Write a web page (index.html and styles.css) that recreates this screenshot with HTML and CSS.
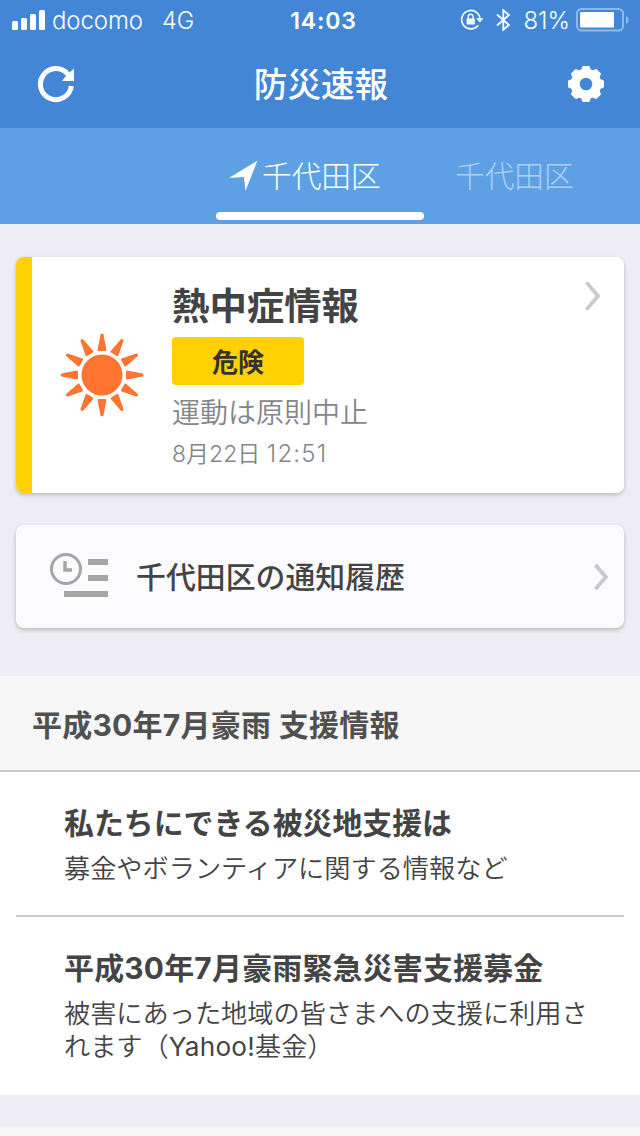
FILE: index.html
```html
<!DOCTYPE html>
<html lang="ja">
<head>
<meta charset="utf-8">
<title>防災速報</title>
<link rel="stylesheet" href="styles.css">
</head>
<body>
<header class="header">
  <div class="status">
    <div class="status-side">
      <svg class="signal" width="34" height="20" viewBox="0 0 34 20" fill="#fff"><rect x="0" y="11" width="6" height="9" rx="1.5"/><rect x="9" y="8" width="6" height="12" rx="1.5"/><rect x="18" y="4" width="6" height="16" rx="1.5"/><rect x="27" y="0" width="6" height="20" rx="1.5"/></svg>
      <span class="carrier">docomo</span><span class="network">4G</span>
    </div>
    <span class="clock">14:03</span>
    <div class="status-side status-right">
      <svg class="lock" width="24" height="22" viewBox="0 0 24 22"><path d="M18.2 16.2A9.2 9.2 0 1 1 20 9.6" fill="none" stroke="#fff" stroke-width="1.6"/><path d="M16.2 9.2h7.4L19.9 13.4z" fill="#fff"/><rect x="6.6" y="9.4" width="8.2" height="6.2" rx=".8" fill="#fff"/><path d="M8.3 10V7.6a2.4 2.4 0 0 1 4.8 0V10" fill="none" stroke="#fff" stroke-width="1.4"/></svg>
      <svg class="bluetooth" width="15" height="24" viewBox="0 0 15 24" fill="none" stroke="#fff" stroke-width="1.8"><path d="M1 6.5 13 17 7.3 21.8V2.2L13 7 1 17.5"/></svg>
      <span class="percent">81%</span>
      <svg class="battery" width="54" height="24" viewBox="0 0 54 24"><rect x="1" y="1" width="46" height="21.5" rx="4.5" fill="none" stroke="#8fb9ec" stroke-width="2"/><rect x="4" y="4" width="34" height="15.5" rx="1" fill="#fff"/><path d="M50 8c3.4 1 3.4 7 0 8z" fill="#8fb9ec"/></svg>
    </div>
  </div>
  <div class="navbar">
    <svg class="reload" width="38" height="38" viewBox="0 0 38 38"><path d="M34.3 21A15.5 15.5 0 1 1 31 9.4" fill="none" stroke="#fff" stroke-width="5"/><path d="M37 3.5V16H25L28 12 31.5 8.5z" fill="#fff"/></svg>
    <h1 class="title">防災速報</h1>
    <svg class="gear" width="38" height="38" viewBox="-19 -19 38 38"><defs><path id="tooth" d="M-5.6-11-3.9-17Q-3.6-18-2.6-18H2.6Q3.6-18 3.9-17L5.6-11z"/></defs><circle r="10.8" fill="none" stroke="#fff" stroke-width="9"/><g fill="#fff"><use href="#tooth"/><use href="#tooth" transform="rotate(45)"/><use href="#tooth" transform="rotate(90)"/><use href="#tooth" transform="rotate(135)"/><use href="#tooth" transform="rotate(180)"/><use href="#tooth" transform="rotate(225)"/><use href="#tooth" transform="rotate(270)"/><use href="#tooth" transform="rotate(315)"/></g></svg>
  </div>
</header>
<nav class="tabs">
  <a class="tab tab-active"><svg width="29" height="32" viewBox="0 0 29 32"><path d="M28.5.5 16.5 31 15 17 0 18z" fill="#fff"/></svg><span>千代田区</span></a>
  <a class="tab tab-next">千代田区</a>
</nav>
<main>
  <section class="card alert">
    <svg class="sun" width="84" height="84" viewBox="-42 -42 84 84" fill="#ff7430"><defs><path id="ray" d="M-4.4-25.2-1.5-40.5Q0-42.4 1.5-40.5L4.4-25.2Q4.5-24 3.4-24H-3.4Q-4.5-24-4.4-25.2z"/></defs><circle r="20.5"/><use href="#ray"/><use href="#ray" transform="rotate(30)"/><use href="#ray" transform="rotate(60)"/><use href="#ray" transform="rotate(90)"/><use href="#ray" transform="rotate(120)"/><use href="#ray" transform="rotate(150)"/><use href="#ray" transform="rotate(180)"/><use href="#ray" transform="rotate(210)"/><use href="#ray" transform="rotate(240)"/><use href="#ray" transform="rotate(270)"/><use href="#ray" transform="rotate(300)"/><use href="#ray" transform="rotate(330)"/></svg>
    <div class="alert-body">
      <h2 class="alert-title">熱中症情報</h2>
      <span class="badge">危険</span>
      <p class="alert-text">運動は原則中止</p>
      <time class="alert-time">8月22日 <span class="alert-clock">12:51</span></time>
    </div>
    <svg class="chevron" width="16" height="30" viewBox="0 0 16 30"><path d="M2.5 2.5 13 15 2.5 27.5" fill="none" stroke="#ccc" stroke-width="3.8" stroke-linecap="round"/></svg>
  </section>
  <section class="card history">
    <svg class="history-icon" width="60" height="46" viewBox="0 0 60 46"><g fill="none" stroke="#a5a5a5"><circle cx="16" cy="16" r="14.5" stroke-width="3"/><path d="M15 8v9h7" stroke-width="3.4"/></g><path d="M38 6h20v6H38zM38 22h20v6H38zM14 38h44v6H14z" fill="#a5a5a5"/></svg>
    <h2 class="history-title">千代田区の通知履歴</h2>
    <svg width="16" height="28" viewBox="0 0 16 28"><path d="M2.5 2 12.8 14 2.5 26" fill="none" stroke="#c7c7cc" stroke-width="3.8"/></svg>
  </section>
  <section class="support">
    <h2 class="support-heading">平成30年7月豪雨 支援情報</h2>
    <article class="item">
      <h3 class="item-title">私たちにできる被災地支援は</h3>
      <p class="item-text">募金やボランティアに関する情報など</p>
    </article>
    <article class="item item-last">
      <h3 class="item-title item-title-wide">平成30年7月豪雨緊急災害支援募金</h3>
      <p class="item-text">被害にあった地域の皆さまへの支援に利用さ<br>れます（<span class="latin">Yahoo!</span>基金）</p>
    </article>
  </section>
  <div class="next-section"></div>
</main>
</body>
</html>
```
FILE: styles.css
```css
* { box-sizing: border-box; margin: 0; padding: 0; }
body {
  width: 640px; height: 1136px; overflow: hidden;
  background: #eeedf3; color: #444;
  font-family: Inter, "Noto Sans CJK JP", sans-serif;
  white-space: nowrap;
}
svg { display: block; flex: none; }
.header { height: 128px; background: #4286d5; color: #fff; }
.status { height: 40px; display: grid; grid-template-columns: 1fr auto 1fr; padding: 0 12px; line-height: 42px; font-size: 23px; }
.status-side { height: 40px; display: flex; align-items: center; }
.status-right { justify-content: flex-end; }
.carrier { margin-left: 6px; padding-top: 2px; font-size: 24px; letter-spacing: -.1px; font-weight: 300; }
.network { margin-left: 19px; padding-top: 2px; font-size: 23.5px; font-weight: 300; }
.clock { font-weight: 600; letter-spacing: .9px; padding-left: 7px; }
.lock { margin-right: 12px; }
.bluetooth { margin-right: 12px; }
.percent { padding-top: 2px; font-size: 24px; font-weight: 300; margin-right: 6px; }
.battery { margin-right: -2px; }
.navbar { height: 88px; display: flex; align-items: center; justify-content: space-between; padding: 0 35px 0 37px; }
.title { font-size: 33.6px; font-weight: 500; line-height: 88px; padding-top: 2px; }
.tabs { height: 96px; background: #5da1e4; color: #fff; display: flex; padding-left: 216px; font-size: 29.7px; font-weight: 300; line-height: 96px; }
.tab { width: 208px; height: 96px; display: flex; align-items: center; }
.tab-active { position: relative; padding-left: 13px; gap: 4px; }
.tab-active::after { content: ""; position: absolute; left: 0; bottom: 4px; width: 208px; height: 8px; border-radius: 4px; background: #fff; }
.tab-next { padding-left: 31px; color: #aed0f2; }
.card { margin: 0 16px; border-radius: 8px; box-shadow: 0 2px 4px rgba(0, 0, 0, .22); display: flex; }
.alert { margin-top: 33px; height: 236px; background: linear-gradient(90deg, #ffd100 16px, #fff 16px); padding-left: 44px; }
.sun { margin-top: 76px; }
.alert-body { width: 400px; margin: 26px 0 0 28px; color: #85858a; }
.alert-title { font-size: 37.4px; line-height: 48px; font-weight: 700; color: #444; }
.badge { display: block; width: 132px; height: 48px; margin: 6px 0 7px; padding-top: 2px; border-radius: 4px; background: #ffd100; color: #33332a; text-align: center; font-size: 26px; font-weight: 700; line-height: 48px; }
.alert-text { font-size: 28px; font-weight: 350; line-height: 42px; }
.alert-time { display: block; font-size: 23px; font-weight: 350; line-height: 40px; }
.alert-clock { font-size: 24px; letter-spacing: 1.2px; }
.chevron { margin: 24px 0 0 13px; }
.history { margin-top: 32px; height: 103px; background: #fbfbfd; align-items: center; padding: 0 15px 0 34px; }
.history-icon { margin-bottom: 2px; }
.history-title { flex: 1; margin-left: 26px; padding-bottom: 4px; font-size: 29.9px; font-weight: 500; }
.support { margin-top: 48px; height: 419px; background: #fff; }
.support-heading { height: 96px; background: #f7f7f7; border-bottom: 2px solid #ccc; padding: 1px 0 0 32px; font-size: 30px; line-height: 96px; letter-spacing: .25px; font-weight: 700; color: #505050; }
.item { height: 145px; margin: 0 16px; padding: 30px 48px 0; border-bottom: 2px solid #ccc; }
.item-last { border-bottom: 0; }
.item-title { font-size: 29.9px; line-height: 42px; font-weight: 700; }
.item-title-wide { letter-spacing: .25px; }
.item-text { margin-top: 8px; font-size: 26.2px; font-weight: 350; line-height: 33px; }
.latin { font-weight: 400; letter-spacing: .2px; }
.next-section { margin-top: 32px; height: 9px; background: #f7f7f7; }
```
